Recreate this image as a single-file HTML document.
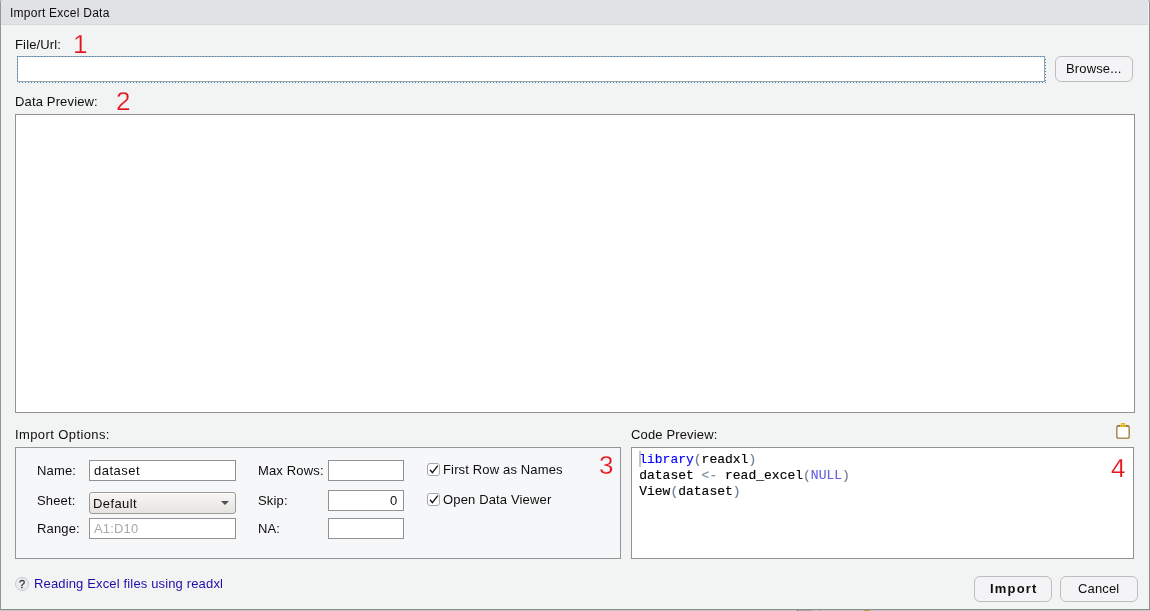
<!DOCTYPE html>
<html><head><meta charset="utf-8">
<style>
html,body{margin:0;padding:0;}
body{width:1150px;height:611px;overflow:hidden;position:relative;background:#c6c6c6;font-family:"Liberation Sans",sans-serif;color:#0e0e0e;}
.a{position:absolute;}
.t{position:absolute;white-space:nowrap;font-size:13px;line-height:13px;letter-spacing:0.15px;}
#win{left:0;top:0;width:1148px;height:609px;background:#f2f3f3;border-left:1px solid #959595;border-right:1px solid #8e8e8e;border-bottom:1px solid #8e8e8e;border-top-left-radius:3px;border-top-right-radius:3px;}
#title{left:1px;top:0;width:1147px;height:24px;background:#e1e2e5;border-bottom:1px solid #d6d8da;border-top-left-radius:3px;border-top-right-radius:3px;}
.box{position:absolute;background:#fff;border:1px solid #929292;box-sizing:border-box;}
.btn{position:absolute;box-sizing:border-box;background:#f4f4f6;border:1px solid #bdbdbd;border-radius:6px;}
.red{position:absolute;color:#e2141c;font-size:26px;line-height:26px;white-space:nowrap;}
.mono{position:absolute;font-family:"Liberation Mono",monospace;font-size:13px;line-height:16px;white-space:pre;color:#000;-webkit-text-stroke-width:0.15px;}
.cb{position:absolute;width:13px;height:13px;box-sizing:border-box;border:1px solid #a8a8a8;border-radius:3px;background:#fff;}
</style></head><body><div id="root" style="position:absolute;left:0;top:0;width:1150px;height:611px;will-change:transform;">
<div id="win" class="a"></div>
<div id="title" class="a"></div>
<div class="t" style="left:10px;top:7px;font-size:12px;line-height:12px;letter-spacing:0.25px;">Import Excel Data</div>

<!-- File/Url -->
<div class="t" style="left:15px;top:38px;">File/Url:</div>
<div class="red" style="left:73px;top:31px;-webkit-text-stroke:0.25px #f2f3f3;">1</div>
<div class="box" style="left:17px;top:56px;width:1028px;height:26px;border:1px solid #a2a2a2;"></div>
<svg class="a" style="left:0;top:0;" width="1150" height="100"><g stroke="#3590da" stroke-width="1" stroke-dasharray="1 2" fill="none"><line x1="17" y1="56.5" x2="1046" y2="56.5"/><line x1="17.5" y1="56" x2="17.5" y2="83"/><line x1="17" y1="82.5" x2="1046" y2="82.5" stroke-dashoffset="1"/><line x1="1045.5" y1="57" x2="1045.5" y2="83" stroke-dashoffset="1"/></g></svg>
<div class="btn" style="left:1055px;top:56px;width:78px;height:26px;"></div>
<div class="t" style="left:1066px;top:62px;">Browse...</div>

<!-- Data preview -->
<div class="t" style="left:15px;top:95px;">Data Preview:</div>
<div class="red" style="left:116px;top:88px;-webkit-text-stroke:0.25px #f2f3f3;">2</div>
<div class="box" style="left:15px;top:114px;width:1120px;height:299px;"></div>

<!-- Import options -->
<div class="t" style="left:15px;top:428px;letter-spacing:0.4px;">Import Options:</div>
<div class="a" style="left:15px;top:447px;width:606px;height:112px;box-sizing:border-box;border:1px solid #959595;background:#f6f7f9;"></div>
<div class="t" style="left:37px;top:464px;">Name:</div>
<div class="box" style="left:89px;top:460px;width:147px;height:21px;"></div>
<div class="t" style="left:94px;top:464px;letter-spacing:0.5px;">dataset</div>
<div class="t" style="left:37px;top:494px;">Sheet:</div>
<div class="a" style="left:89px;top:492px;width:147px;height:22px;box-sizing:border-box;border:1px solid #9e9a95;border-radius:3px;background:linear-gradient(#f8f7f5,#e5e3e0);box-shadow:inset 0 1px #fff;"></div>
<div class="t" style="left:93px;top:497px;letter-spacing:0.4px;">Default</div>
<div class="a" style="left:221px;top:501px;width:0;height:0;border-left:4px solid transparent;border-right:4px solid transparent;border-top:4px solid #505050;"></div>
<div class="t" style="left:37px;top:522px;">Range:</div>
<div class="box" style="left:89px;top:518px;width:147px;height:21px;"></div>
<div class="t" style="left:94px;top:522px;color:#a9a9a9;">A1:D10</div>

<div class="t" style="left:258px;top:464px;">Max Rows:</div>
<div class="box" style="left:328px;top:460px;width:76px;height:21px;"></div>
<div class="t" style="left:258px;top:494px;">Skip:</div>
<div class="box" style="left:328px;top:490px;width:76px;height:21px;"></div>
<div class="t" style="left:390px;top:494px;">0</div>
<div class="t" style="left:258px;top:522px;">NA:</div>
<div class="box" style="left:328px;top:518px;width:76px;height:21px;"></div>

<div class="cb" style="left:427px;top:463px;"></div>
<svg class="a" style="left:427px;top:463px;" width="13" height="13"><path d="M3 6.8 L5.4 9.6 L10.8 2.6" stroke="#151515" stroke-width="1.4" fill="none"/></svg>
<div class="t" style="left:443px;top:463px;">First Row as Names</div>
<div class="cb" style="left:427px;top:493px;"></div>
<svg class="a" style="left:427px;top:493px;" width="13" height="13"><path d="M3 6.8 L5.4 9.6 L10.8 2.6" stroke="#151515" stroke-width="1.4" fill="none"/></svg>
<div class="t" style="left:443px;top:493px;">Open Data Viewer</div>
<div class="red" style="left:599px;top:452px;-webkit-text-stroke:0.25px #f6f7f9;">3</div>

<!-- Code preview -->
<div class="t" style="left:631px;top:428px;">Code Preview:</div>
<svg class="a" style="left:1114px;top:422px;" width="18" height="18" viewBox="0 0 18 18">
  <rect x="2.8" y="3.8" width="12.4" height="12.4" rx="1.8" fill="#fff" stroke="#b48d5c" stroke-width="1.6"/>
  <line x1="3.5" y1="3.8" x2="14.5" y2="3.8" stroke="#8f6a34" stroke-width="1.6"/>
  <path d="M7 1 H11 V3 H12 V5 H6 V3 H7 Z" fill="#e4b11f"/>
  <rect x="8" y="2" width="2" height="1" fill="#f3d878"/>
</svg>
<div class="box" style="left:631px;top:447px;width:503px;height:112px;"></div>
<div class="a" style="left:639px;top:451px;width:2px;height:16px;background:#c4c4c4;"></div>
<div class="mono" style="left:639.2px;top:452px;"><span style="color:#0000ff">library</span><span style="color:#6f7f8f">(</span>readxl<span style="color:#6f7f8f">)</span>
dataset <span style="color:#7d8ca3">&lt;-</span> read_excel<span style="color:#6f7f8f">(</span><span style="color:#6565e0">NULL</span><span style="color:#6f7f8f">)</span>
View<span style="color:#6f7f8f">(</span>dataset<span style="color:#6f7f8f">)</span></div>
<div class="red" style="left:1111px;top:455px;-webkit-text-stroke:0.25px #fff;">4</div>

<!-- footer -->
<div class="a" style="left:15px;top:577px;width:14px;height:14px;box-sizing:border-box;border-radius:50%;border:1px solid #c3cad2;background:#e8edf1;"></div>
<div class="a" style="left:15px;top:578px;width:14px;text-align:center;font-size:11px;line-height:12px;color:#2f343a;-webkit-text-stroke-width:0.3px;">?</div>
<div class="t" style="left:34px;top:577px;color:#1d10aa;">Reading Excel files using readxl</div>

<div class="btn" style="left:974px;top:576px;width:78px;height:26px;"></div>
<div class="t" style="left:990px;top:582px;font-weight:bold;letter-spacing:1.2px;">Import</div>
<div class="btn" style="left:1060px;top:576px;width:78px;height:26px;"></div>
<div class="t" style="left:1078px;top:582px;">Cancel</div>
<div class="a" style="left:797px;top:610px;width:1px;height:1px;background:#777;"></div>
<div class="a" style="left:798px;top:610px;width:14px;height:1px;background:#a9a9a9;"></div>
<div class="a" style="left:812px;top:610px;width:7px;height:1px;background:#c2c6ca;"></div>
<div class="a" style="left:819px;top:610px;width:1px;height:1px;background:#9a9a9a;"></div>
<div class="a" style="left:864px;top:610px;width:6px;height:1px;background:#b0a050;"></div>
</div></body></html>
